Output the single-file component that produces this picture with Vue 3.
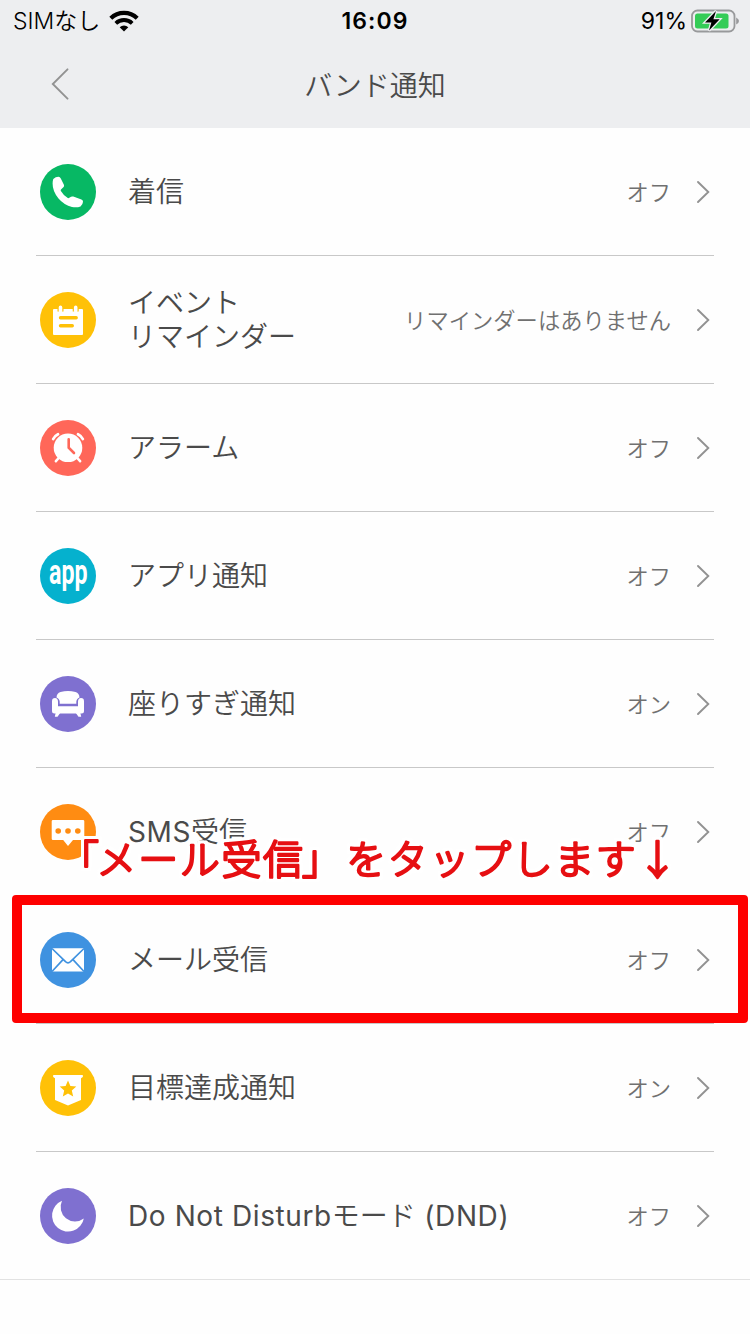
<script setup>
  import { ref } from 'vue'

  // icon: which glyph is drawn inside the circle
  const items = ref([
    { icon: 'call', color: '#07b864', label: '着信', value: 'オフ' },
    { icon: 'event', color: '#ffc107', label: 'イベント\nリマインダー', value: 'リマインダーはありません' },
    { icon: 'alarm', color: '#ff6759', label: 'アラーム', value: 'オフ' },
    { icon: 'app', color: '#05b1ce', label: 'アプリ通知', value: 'オフ' },
    { icon: 'sofa', color: '#7f70d0', label: '座りすぎ通知', value: 'オン' },
    { icon: 'sms', color: '#ff8c12', label: 'SMS受信', value: 'オフ' },
    { icon: 'mail', color: '#3f92e0', label: 'メール受信', value: 'オフ', marked: true },
    { icon: 'goal', color: '#ffc107', label: '目標達成通知', value: 'オン' },
    { icon: 'moon', color: '#7f70d0', label: 'Do Not Disturbモード (DND)', value: 'オフ' },
  ])

  // latin runs are set a bit wider than the japanese ones
  const split = (label) => label.split(/([ -~]+)/).filter((s) => s)
  const isLatin = (s) => /^[ -~]+$/.test(s)
</script>

<template>
  <div class="page">
    <header class="header">
      <div class="status">
        <div class="status-left">
          <span>SIMなし</span>
          <svg class="wifi" width="30" height="22" viewBox="0 0 30 22">
            <path d="M1.8 8.2A19 19 0 0 1 28.2 8.2" fill="none" stroke="#000" stroke-width="4.2" />
            <path d="M6.8 13.3A12 12 0 0 1 23.2 13.3" fill="none" stroke="#000" stroke-width="3.9" />
            <path d="M10.7 17.2A6.2 6.2 0 0 1 19.3 17.2L15 21.5Z" />
          </svg>
        </div>
        <div class="time">16:09</div>
        <div class="status-right">
          <span>91%</span>
          <svg width="48" height="24" viewBox="0 0 48 24">
            <rect x="1" y="1.5" width="42.5" height="21" rx="5.5" fill="none" stroke="#98999b" stroke-width="1.8" />
            <rect x="4" y="4.5" width="33.5" height="15" rx="2.5" fill="#34cc57" />
            <path d="M45.2 8.5Q48 10 48 12T45.2 15.5Z" fill="#98999b" />
            <path d="M25 2L14 13.5H20.4L18 21.5L28.7 10.3H22.4Z" fill="#000" stroke="#edeef0" stroke-width="2.6" paint-order="stroke" />
          </svg>
        </div>
      </div>
      <div class="nav">
        <svg class="back" width="18" height="32" viewBox="0 0 18 32">
          <path d="M16.5 1.3L1.8 16L16.5 30.7" />
        </svg>
        <h1>バンド通知</h1>
      </div>
    </header>

    <ul class="list">
      <li v-for="item in items" :key="item.icon" class="row">
        <svg class="icon" viewBox="0 0 56 56" :style="{ color: item.color }">
          <circle cx="28" cy="28" r="28" fill="currentColor" />
          <path
            v-if="item.icon === 'call'"
            d="M13.3 15Q15.8 12.6 18.5 12.7Q20 12.8 20.8 14.5L23.9 20.8Q24.5 22.1 23.6 23.1L21 25.4Q20.4 26 20.9 27Q23.5 31.5 27.8 34Q28.6 34.4 29.3 33.7L31 32.7Q32 32.2 33.3 32.6L41.4 35.4Q43.3 36.1 43 37.7Q42.8 40.7 40.5 42.4Q37 43.8 32 43Q24 41 18.5 34.5Q12.5 27.2 12.6 19.5Q12.6 16.5 13.3 15Z"
            fill="#fff"
          />
          <g v-else-if="item.icon === 'event'">
            <rect x="13" y="17" width="30" height="26" rx="1" fill="#fff" />
            <path d="M20.5 16V20M35.7 16V20" stroke="currentColor" stroke-width="6" />
            <path d="M20.5 15.4V19M35.7 15.4V19" stroke="#fff" stroke-width="3.6" stroke-linecap="round" />
            <rect x="14" y="19.5" width="28" height="3" fill="#fff" />
            <path d="M20.5 25.7H36.2M20.5 33.7H32.3" stroke="currentColor" stroke-width="3.4" stroke-linecap="round" />
          </g>
          <g v-else-if="item.icon === 'alarm'" fill="none" stroke-linecap="round">
            <circle cx="28" cy="27.8" r="14.3" fill="#fff" />
            <path d="M13.2 19Q14.6 16 18 14.3M42.8 19Q41.4 16 38 14.3" stroke="#fff" stroke-width="2.8" />
            <path d="M18.7 38L15.9 41.2M37.3 38L40.1 41.2" stroke="#fff" stroke-width="2.6" />
            <path d="M28.7 19.2V27.7L34 33" stroke="currentColor" stroke-width="2.6" />
          </g>
          <text
            v-else-if="item.icon === 'app'"
            class="app-text"
            x="9"
            y="35.6"
            textLength="38.5"
            lengthAdjust="spacingAndGlyphs"
          >app</text>
          <g v-else-if="item.icon === 'sofa'" fill="#fff">
            <path d="M20.5 15.9Q28 14.2 35.5 15.9Q39.3 17 39.5 21.4Q36.4 22.8 36.3 25.8V27.8H19.7V25.8Q19.6 22.8 16.5 21.4Q16.7 17 20.5 15.9Z" />
            <path d="M12 25.2Q12 21.9 15 21.9Q18 22.2 18 25.7V30.3H38V25.7Q38 22.2 41 21.9Q44 21.9 44 25.2V35Q44 37.5 41.5 37.5H14.5Q12 37.5 12 35Z" />
            <path d="M15.8 36.5H20.5L17.5 40.8H14.8ZM40.2 36.5H35.5L38.5 40.8H41.2Z" />
          </g>
          <g v-else-if="item.icon === 'sms'">
            <path d="M13 16H43Q44.3 16 44.3 17.3V34.8Q44.3 36 43 36H33L28 42L23.2 36H13Q11.7 36 11.7 34.8V17.3Q11.7 16 13 16Z" fill="#fff" />
            <circle v-for="x in [18.2, 28, 37.8]" :key="x" :cx="x" cy="27" r="2.8" fill="currentColor" />
          </g>
          <g v-else-if="item.icon === 'mail'" fill="none" stroke="currentColor" stroke-width="1.7">
            <rect x="12" y="16.3" width="32" height="23.2" rx=".8" fill="#fff" stroke="none" />
            <path d="M12 16.5L25.5 29.7Q28 32 30.5 29.7L44 16.5M12 39.5L23 27.7M44 39.5L33 27.7" />
          </g>
          <g v-else-if="item.icon === 'goal'">
            <path d="M13.5 15H42.5Q43.7 16 42.5 17.3L41 18.3V40L28 45.6L15 40V18.3L13.5 17.3Q12.3 16 13.5 15Z" fill="#fff" />
            <path d="M28 20.5L30.4 26.1L36.3 26.6L31.8 30.6L33.2 36.5L28 33.4L22.8 36.5L24.2 30.6L19.7 26.6L25.6 26.1Z" fill="currentColor" />
          </g>
          <path v-else d="M22 12.8A14.4 14.4 0 0 0 43.8 30.4A16 16 0 1 1 22 12.8Z" fill="#fff" />
        </svg>
        <span class="label"><span v-for="part in split(item.label)" :key="part" :class="{ latin: isLatin(part) }">{{ part }}</span></span>
        <span class="value">{{ item.value }}</span>
        <svg class="arrow" width="14" height="24" viewBox="0 0 14 24">
          <path d="M2 2L12.3 12L2 22" />
        </svg>
        <!-- red frame and the hint above it -->
        <template v-if="item.marked">
          <div class="frame"></div>
          <svg class="hint" width="640" height="56" viewBox="0 0 640 56">
            <text x="0" y="43" dx="4 -4 0 0 0 0 -3 3">「メール受信」をタップします↓</text>
          </svg>
        </template>
      </li>
    </ul>
  </div>
</template>

<style>
body {
  background: #fefefe;
}
</style>

<style scoped>
.page {
  width: 750px;
  height: 1334px;
  overflow: hidden;
  font-family: Inter, "Noto Sans CJK JP", sans-serif;
  color: #4a4a4a;
}

.header {
  height: 128px;
  background: #edeef0;
}

.status {
  display: grid;
  grid-template-columns: 1fr auto 1fr;
  align-items: center;
  height: 40px;
  padding: 0 11px 0 13px;
  color: #000;
  font-size: 23px;
  line-height: 40px;
}

.status-left,
.status-right {
  display: flex;
  align-items: center;
}

.status-left {
  gap: 9px;
  font-weight: 350;
}

.status-right {
  justify-content: flex-end;
  gap: 4px;
}

.status span,
.time {
  padding-top: 1px;
}

.time {
  margin-right: 2px;
  font-weight: 600;
  letter-spacing: 1.1px;
}

.nav {
  display: grid;
  grid-template-columns: 69px 1fr 69px;
  align-items: center;
  height: 88px;
}

.back {
  justify-self: end;
}

.back path,
.arrow path {
  fill: none;
  stroke: #929292;
  stroke-width: 1.9;
  stroke-linecap: round;
}

.nav h1 {
  margin: 0;
  padding-bottom: 1px;
  text-align: center;
  font-size: 28px;
  font-weight: 350;
}

.list {
  margin: 0;
  padding: 0;
  list-style: none;
}

.row {
  position: relative;
  display: flex;
  align-items: center;
  box-sizing: border-box;
  height: 128px;
  margin: 0 36px;
  padding: 1px 4px 0;
  border-bottom: 1px solid #c8c8c8;
}

.row:last-child {
  margin: 0;
  padding: 1px 40px 0;
  border-color: #e2e2e2;
}

.icon {
  flex: none;
  width: 56px;
  height: 56px;
  overflow: visible;
}

.app-text {
  font-family: Roboto, sans-serif;
  font-size: 35px;
  font-weight: 700;
  fill: #fff;
}

.label {
  flex: 1;
  margin-left: 32px;
  font-size: 28px;
  font-weight: 350;
  line-height: 34px;
  white-space: pre-line;
}

.latin {
  font-weight: 400;
  letter-spacing: .6px;
}

.value {
  margin-right: 25px;
  padding-bottom: 2px;
  font-size: 22.3px;
  font-weight: 350;
  color: #707070;
}

.frame {
  position: absolute;
  top: -1px;
  left: -24px;
  box-sizing: border-box;
  width: 736px;
  height: 128px;
  border: 10px solid #fe0000;
  border-radius: 4px;
}

.hint {
  position: absolute;
  top: -65px;
  left: 19px;
  overflow: visible;
  filter: drop-shadow(3px 0 #fff) drop-shadow(-3px 0 #fff) drop-shadow(0 3px #fff) drop-shadow(0 -3px #fff);
}

.hint text {
  fill: #e60f12;
  stroke: #e60f12;
  stroke-width: 2.4px;
  stroke-linejoin: round;
  font-family: "Noto Sans CJK JP", sans-serif;
  font-size: 40px;
  font-weight: 300;
  letter-spacing: 1.6px;
}
</style>
